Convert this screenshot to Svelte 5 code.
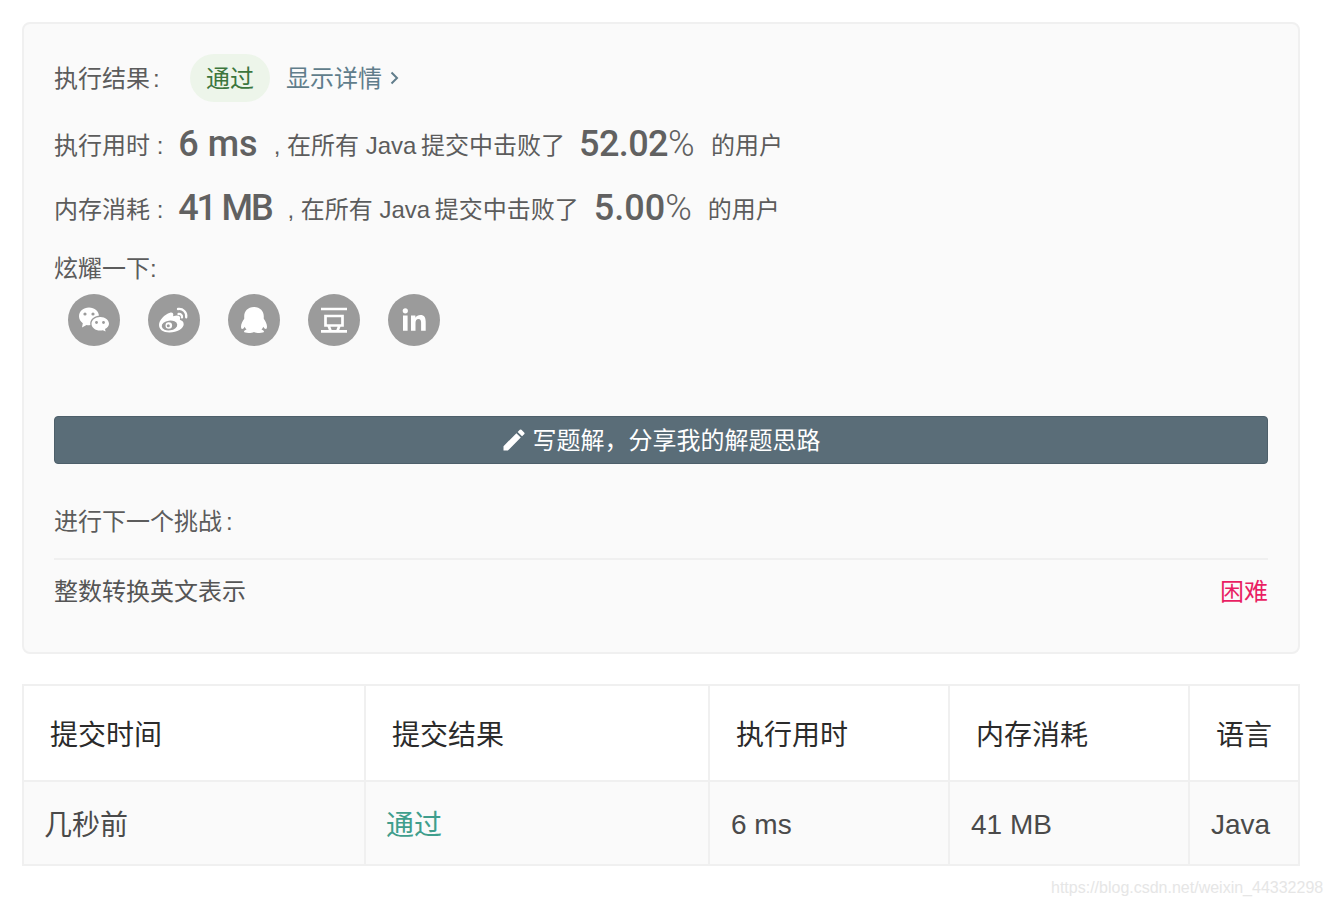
<script>
  const columns = [
    { head: '提交时间', cell: '几秒前', width: 342 },
    { head: '提交结果', cell: '通过', width: 344, accent: true },
    { head: '执行用时', cell: '6 ms', width: 240, latin: true },
    { head: '内存消耗', cell: '41 MB', width: 240, latin: true },
    { head: '语言', cell: 'Java', width: 110, latin: true }
  ];
</script>

<div class="page">
  <section class="card">
    <div class="row result">
      <span class="label up">执行结果<span class="colon">:</span></span>
      <span class="pill">通过</span>
      <span class="details up">显示详情
        <svg class="chev" viewBox="0 0 10 14" width="10" height="14"><path d="M2.500 1.500 8 7l-5.500 5.500" fill="none" stroke="currentColor" stroke-width="2"/></svg>
      </span>
    </div>
    <div class="row stat first">
      <span class="label up">执行用时 :</span><strong class="num a">6 ms</strong><span class="sentence up">, 在所有 <i>Java</i> 提交中击败了</span><strong class="num b narrow">52.02<small>%</small></strong><span class="tail up">的用户</span>
    </div>
    <div class="row stat second">
      <span class="label up">内存消耗 :</span><strong class="num a tight">41 MB</strong><span class="sentence up">, 在所有 <i>Java</i> 提交中击败了</span><strong class="num b low">5.00<small>%</small></strong><span class="tail up">的用户</span>
    </div>
    <div class="share-label">炫耀一下:</div>
    <div class="share">
      <span class="icon"><svg viewBox="0 0 52 52">
        <path d="M21 13.500c-5.600 0-10 3.900-10 8.800 0 2.800 1.500 5.300 3.800 6.900l-.8 4.300 4.500-2.600c.8.200 1.600.3 2.500.3 5.600 0 10-3.900 10-8.900s-4.400-8.800-10-8.800z" fill="#fff"/>
        <circle cx="17" cy="20" r="1.600" fill="#9b9b9b"/><circle cx="25" cy="20" r="1.600" fill="#9b9b9b"/>
        <path d="M32 21.500c-5.300 0-9.800 3.600-9.800 8.300s4.500 8.300 9.800 8.300c1 0 2-.1 2.800-.4l4.200 1.800-1-3.500c2.300-1.500 3.800-3.700 3.800-6.200 0-4.700-4.500-8.300-9.800-8.300z" fill="#9b9b9b"/>
        <path d="M32 23c-4.700 0-8.500 3-8.500 6.800s3.800 6.800 8.500 6.800c1 0 2-.1 2.900-.4l2.700 1.200-.6-2.400c2.400-1.200 4-3 4-5.200 0-3.800-3.800-6.800-8.500-6.800z" fill="#fff"/>
        <circle cx="28.500" cy="28.500" r="1.400" fill="#9b9b9b"/><circle cx="35.500" cy="28.500" r="1.400" fill="#9b9b9b"/>
      </svg></span>
      <span class="icon"><svg viewBox="0 0 52 52">
        <path d="M21.500 38.500C15 38.500 11 35.500 11 31c0-4.700 5.500-10.500 11-12.200 2.600-.8 3.900.9 3.100 3.400 3.300-1.200 7.100-1.200 7.100 1.800 0 .7-.2 1.300-.4 1.800 2.200.7 3.900 2 3.900 4.400 0 4.200-6.600 8.300-14.200 8.300z" fill="#fff"/>
        <ellipse cx="21.500" cy="31.500" rx="7.800" ry="4.900" fill="#9b9b9b" transform="rotate(-8 21.500 31.500)"/>
        <circle cx="20.800" cy="31.500" r="3.300" fill="#fff"/><circle cx="20.300" cy="31.800" r="1.500" fill="#9b9b9b"/>
        <path d="M30 15c4.800-.8 9 3.300 8.200 8.300M30.500 20c2.200-.3 3.800 1.300 3.500 3.400" fill="none" stroke="#fff" stroke-width="2.300" stroke-linecap="round"/>
      </svg></span>
      <span class="icon"><svg viewBox="0 0 52 52">
        <path d="M26 13c-6.300 0-9.800 4.300-9.800 9.500 0 1 .1 1.500 0 2.300-1.500 2-3.200 5.200-3.200 7.700 0 1.700.5 2.500 1.200 2.500.8 0 1.700-1 2.500-2.300.4 1 1 1.900 1.800 2.700-1.500.6-2.500 1.300-2.500 2.200 0 1 2 1.400 4.600 1.400 2.400 0 4.100-.4 5.400-1.100 1.300.7 3 1.100 5.400 1.100 2.600 0 4.600-.4 4.600-1.400 0-.9-1-1.600-2.500-2.200.8-.8 1.400-1.700 1.800-2.700.8 1.300 1.700 2.300 2.500 2.300.7 0 1.200-.8 1.200-2.500 0-2.500-1.700-5.700-3.200-7.700-.1-.8 0-1.300 0-2.300 0-5.200-3.500-9.500-9.800-9.500z" fill="#fff"/>
      </svg></span>
      <span class="icon"><svg viewBox="0 0 52 52">
        <path d="M13 15h26M13 37.300h26M17.500 22h17v9.500h-17zM20.500 31.500l2.200 5.800M31.500 31.500l-2.200 5.800" fill="none" stroke="#fff" stroke-width="2.700"/>
      </svg></span>
      <span class="icon"><svg viewBox="0 0 52 52">
        <circle cx="17.300" cy="16.800" r="2.600" fill="#fff"/>
        <path d="M15 21.500h4.600v15.200H15zM23 21.500h4.400v2.200c1-1.600 2.800-2.600 5-2.600 4 0 5.300 2.600 5.300 6.600v9h-4.600v-8c0-2.300-.7-3.700-2.600-3.700-2 0-3 1.500-3 3.700v8H23z" fill="#fff"/>
      </svg></span>
    </div>
    <button class="write">
      <svg viewBox="0 0 24 24" width="28" height="28"><path d="M3 17.250V21h3.750L17.810 9.940l-3.750-3.750L3 17.250zM20.710 7.040a1 1 0 0 0 0-1.410l-2.340-2.340a1 1 0 0 0-1.410 0l-1.830 1.830 3.750 3.750 1.830-1.830z" fill="#fff"/></svg>
      <span class="up">写题解，分享我的解题思路</span>
    </button>
    <div class="next-label">进行下一个挑战<span class="colon wide">:</span></div>
    <div class="next">
      <span>整数转换英文表示</span>
      <span class="hard">困难</span>
    </div>
  </section>

  <table>
    <thead>
      <tr>{#each columns as c}<th style="width:{c.width}px">{c.head}</th>{/each}</tr>
    </thead>
    <tbody>
      <tr>{#each columns as c}<td class:accent={c.accent} class:latin={c.latin}>{c.cell}</td>{/each}</tr>
    </tbody>
  </table>
  <div class="watermark">https://blog.csdn.net/weixin_44332298</div>
</div>

<style>
  :global(body) { margin: 0; background: #fff; }
  .page {
    width: 1332px; height: 906px; box-sizing: border-box; padding: 22px 32px 0 22px; overflow: hidden;
    font-family: "Liberation Sans", "Noto Sans CJK SC", sans-serif; color: #5c5c5c; position: relative;
  }
  .card {
    box-sizing: border-box; height: 632px; border: 2px solid #f0f0f0; border-radius: 8px; background: #fafafa;
    padding: 30px 30px 0; font-size: 24px;
  }
  .row { display: flex; align-items: center; }
  .result { height: 48px; }
  .label { white-space: pre; }
  .up { padding-bottom: 4px; }
  .colon { margin-left: 3px; }
  .colon.wide { margin-left: 4px; }
  .result .label { width: 136px; }
  .pill {
    width: 80px; height: 48px; border-radius: 24px; background: #edf5ea; color: #3c763d; box-sizing: border-box; padding-bottom: 4px;
    display: flex; align-items: center; justify-content: center;
  }
  .details { color: #607d8b; margin-left: 16px; display: flex; align-items: center; gap: 7px; }
  .chev { margin-top: 4px; }
  .stat { height: 44px; white-space: pre; }
  .first { margin-top: 21px; }
  .second { margin-top: 20px; }
  .num { font-family: Roboto, sans-serif; font-weight: 500; font-size: 36px; color: #616161; padding-bottom: 2px; }
  .num small { font-size: inherit; font-weight: 300; }
  .a { margin-left: 15px; margin-right: 16px; }
  .tight { letter-spacing: -2.2px; }
  .narrow { letter-spacing: -0.6px; }
  .b { margin-left: 14px; margin-right: 17px; }
  .low { margin-left: 15px; margin-right: 16px; }
  i { font-style: normal; margin-right: -2px; }
  .share-label { margin-top: 20px; line-height: 36px; }
  .share { display: flex; gap: 28px; padding-left: 14px; margin-top: 7px; }
  .icon { width: 52px; height: 52px; border-radius: 50%; background: #9b9b9b; display: block; }
  .icon svg { display: block; width: 52px; height: 52px; }
  .write {
    display: flex; align-items: center; justify-content: center; gap: 5px; width: 100%; height: 48px; margin-top: 70px;
    padding: 0 2px 0 0; background: #5a6d78; border: 1px solid #4d5f6a; border-radius: 4px; color: #fff;
    font: inherit;
  }
  .next-label { margin-top: 40px; line-height: 36px; }
  .next {
    display: flex; justify-content: space-between; align-items: center; margin-top: 18px; height: 64px; padding-bottom: 4px;
    border-top: 2px solid #f0f0f0; box-sizing: border-box; color: #555;
  }
  .hard { color: #e91e63; }
  table {
    margin-top: 30px; border-collapse: separate; border-spacing: 0; table-layout: fixed; width: 1278px;
    border-left: 2px solid #f0f0f0; border-top: 2px solid #f0f0f0; font-size: 28px;
  }
  th, td { border-right: 2px solid #f0f0f0; border-bottom: 2px solid #f0f0f0; box-sizing: border-box; text-align: left; }
  th { height: 96px; padding: 0 0 0 26px; font-weight: 400; color: #2b2b2b; background: #fff; }
  td { height: 84px; padding: 0 0 0 20px; color: #4a4a4a; background: #fafafa; }
  td.latin { padding-top: 4px; padding-left: 21px; }
  .accent { color: #3f9e8d; }
  .watermark {
    position: absolute; left: 1051px; top: 879px; font-size: 16px; color: #e6e6e6; white-space: nowrap;
  }
</style>
